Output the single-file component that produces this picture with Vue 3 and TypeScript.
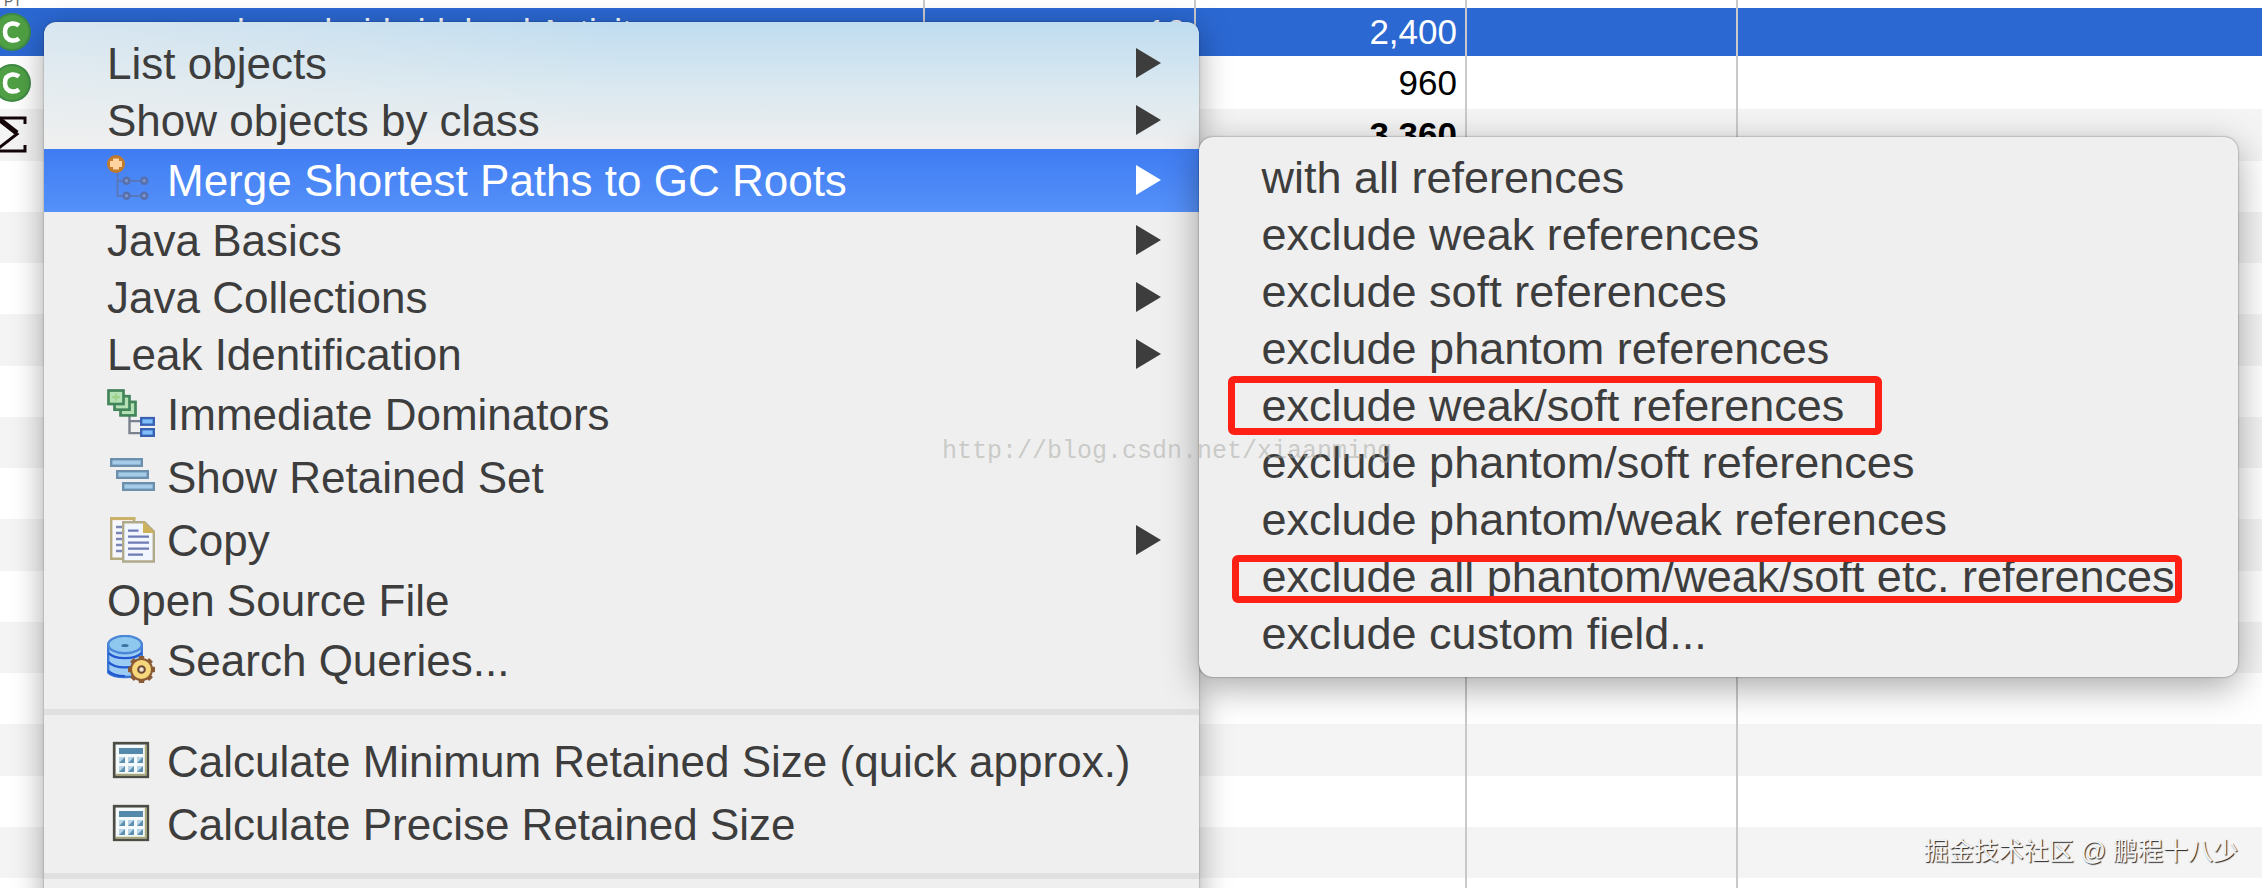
<script setup lang="ts">
interface MenuEntry {
  label: string
  icon?: 'merge' | 'dominators' | 'retained' | 'copy' | 'search' | 'calculator'
  submenu?: boolean
  open?: boolean
}

const groups: MenuEntry[][] = [
  [
    { label: 'List objects', submenu: true },
    { label: 'Show objects by class', submenu: true },
    { label: 'Merge Shortest Paths to GC Roots', icon: 'merge', submenu: true, open: true },
    { label: 'Java Basics', submenu: true },
    { label: 'Java Collections', submenu: true },
    { label: 'Leak Identification', submenu: true },
    { label: 'Immediate Dominators', icon: 'dominators' },
    { label: 'Show Retained Set', icon: 'retained' },
    { label: 'Copy', icon: 'copy', submenu: true },
    { label: 'Open Source File' },
    { label: 'Search Queries...', icon: 'search' },
  ],
  [
    { label: 'Calculate Minimum Retained Size (quick approx.)', icon: 'calculator' },
    { label: 'Calculate Precise Retained Size', icon: 'calculator' },
  ],
  [],
]

const references: { label: string; mark?: 'loose' | 'tight' }[] = [
  { label: 'with all references' },
  { label: 'exclude weak references' },
  { label: 'exclude soft references' },
  { label: 'exclude phantom references' },
  { label: 'exclude weak/soft references', mark: 'loose' },
  { label: 'exclude phantom/soft references' },
  { label: 'exclude phantom/weak references' },
  { label: 'exclude all phantom/weak/soft etc. references', mark: 'tight' },
  { label: 'exclude custom field...' },
]

const emptyRows = 15
const keyColumns = [4, 7, 10]
const keyRows = [7, 10]
const gearAngles = [0, 45, 90, 135, 180, 225, 270, 315]
</script>

<template>
  <main class="screen">
    <table class="histogram">
      <colgroup>
        <col class="name-col" />
        <col class="size-col" />
        <col class="size-col" />
        <col class="size-col" />
        <col />
      </colgroup>
      <tbody>
        <tr class="filter">
          <td><div class="cut">PT</div></td>
          <td></td><td></td><td></td><td></td>
        </tr>
        <tr class="selected">
          <td>
            <div class="name">
              <svg class="class-icon" viewBox="7 0 32 38" aria-hidden="true">
                <circle cx="19" cy="19" r="19" fill="#3f8a45" />
                <circle cx="19" cy="19" r="17" fill="#4f9f44" />
                <path d="M26 12.500Q23 10 19 10.500Q12 11.500 12 19Q12 26.500 19 27.500Q23 28 26 25.500" fill="none" stroke="#fff" stroke-width="4.500" />
              </svg>
              <span>com.example.android.sideload Activity</span>
            </div>
          </td>
          <td>10</td><td>2,400</td><td></td><td></td>
        </tr>
        <tr class="second">
          <td>
            <div class="name">
              <svg class="class-icon" viewBox="7 0 32 38" aria-hidden="true">
                <circle cx="19" cy="19" r="19" fill="#3f8a45" />
                <circle cx="19" cy="19" r="17" fill="#4f9f44" />
                <path d="M26 12.500Q23 10 19 10.500Q12 11.500 12 19Q12 26.500 19 27.500Q23 28 26 25.500" fill="none" stroke="#fff" stroke-width="4.500" />
              </svg>
            </div>
          </td>
          <td></td><td>960</td><td></td><td></td>
        </tr>
        <tr class="total">
          <td>
            <svg class="sigma" viewBox="0 0 28 38" aria-hidden="true">
              <path d="M-8 2H25V8M-4 2L17 18L-5 35H25V29" fill="none" stroke="#140508" stroke-width="3" />
              <path d="M-2 2L17 17" stroke="#140508" stroke-width="5" />
            </svg>
          </td>
          <td></td><td>3,360</td><td></td><td></td>
        </tr>
        <tr v-for="n in emptyRows" :key="n" class="empty">
          <td></td><td></td><td></td><td></td><td></td>
        </tr>
      </tbody>
    </table>

    <nav class="menu" aria-label="Context menu">
      <ul v-for="(group, g) in groups" :key="g" class="group">
        <li v-for="item in group" :key="item.label" class="entry">
          <button type="button" class="item" :class="{ tall: item.icon, open: item.open }">
            <svg v-if="item.icon" class="icon" viewBox="0 0 16 16" aria-hidden="true">
              <g v-if="item.icon === 'merge'">
                <path d="M3.500 6V13.600H12M3.500 8.600H12" fill="none" stroke="#5b76b5" stroke-width=".6" />
                <circle cx="3" cy="3" r="3" fill="#c27a2c" />
                <path d="M2 1.200H4V2H5V4H4V4.800H2V4H1V2H2Z" fill="#ffd3a0" />
                <g fill="#7c93c6" stroke="#5770ad" stroke-width=".8">
                  <circle cx="6.500" cy="8.600" r="1" />
                  <circle cx="12.400" cy="8.600" r="1" />
                  <circle cx="6.500" cy="13.600" r="1" />
                  <circle cx="12.400" cy="13.600" r="1" />
                </g>
              </g>
              <g v-else-if="item.icon === 'dominators'">
                <path d="M7.500 8.500V14.700H11M7.500 10.700H11" fill="none" stroke="#7a818e" stroke-width=".8" />
                <g fill="#b5e0b4" stroke="#43855a" stroke-width=".9">
                  <rect x="4.500" y="4.300" width="5" height="4.500" />
                  <rect x="2.500" y="2.400" width="5" height="4.500" />
                  <rect x=".5" y=".5" width="5" height="4.500" />
                </g>
                <path d="M1.700 2.700H4.300M3 1.600V3.900" stroke="#9fd289" stroke-width=".7" />
                <g fill="#7fc0fb" stroke="#3a62b4" stroke-width=".8">
                  <rect x="11.400" y="9.700" width="4.200" height="2.200" />
                  <rect x="11.400" y="13.400" width="4.200" height="2.200" />
                </g>
              </g>
              <g v-else-if="item.icon === 'retained'" fill="#a4cbe8" stroke="#6c8fae" stroke-width=".8">
                <rect x="1.400" y="2.400" width="10.200" height="2.200" />
                <rect x="3.400" y="6.400" width="10.200" height="2.200" />
                <rect x="5.400" y="10.400" width="10.200" height="2.200" />
              </g>
              <g v-else-if="item.icon === 'copy'">
                <path d="M1.400 1.200H9V14.600H1.400Z" fill="#f5f7fc" stroke="#b5aa7c" stroke-width=".8" />
                <path d="M1 1.200H9.500" stroke="#c9b267" stroke-width="1" />
                <path d="M3 4H5M3 6H5M3 8H5M3 10H5M3 12H5" stroke="#7b86b4" stroke-width=".8" />
                <path d="M5.400 2.400H12.500L15.600 5.500V15.500H5.400Z" fill="#f2f6fe" stroke="#b0a98a" stroke-width=".8" />
                <path d="M12 2L16 6H12Z" fill="#cdb15b" />
                <path d="M7 5.200H10.500M7 7.200H14M7 9.200H14M7 11.200H14M7 13.200H12" stroke="#6f7bb5" stroke-width=".8" />
              </g>
              <g v-else-if="item.icon === 'search'">
                <path d="M.4 3V12.500Q1.500 14 6 14T11.600 12.500V3Z" fill="#9cccf4" stroke="#3d78d8" stroke-width=".8" />
                <path d="M.5 6Q2 7.700 6 7.700T11.500 6M.5 9Q2 10.800 6 10.800T11.500 9M.5 12Q2 13.700 6 13.700" fill="none" stroke="#2358d0" stroke-width=".8" />
                <ellipse cx="6" cy="3.200" rx="5.600" ry="2.900" fill="#8fc8ee" stroke="#4a86d8" stroke-width=".8" />
                <ellipse cx="6" cy="3.500" rx="1.200" ry=".5" fill="#3a6f9f" />
                <g fill="#8a5a35">
                  <rect v-for="a in gearAngles" :key="a" x="10.600" y="7" width="1.800" height="2" :transform="`rotate(${a} 11.500 11.500)`" />
                </g>
                <circle cx="11.500" cy="11.500" r="3.500" fill="#f6d77c" stroke="#8a5a35" stroke-width=".7" />
                <circle cx="11.500" cy="11.500" r="1.100" fill="#efe6d8" stroke="#6e4a35" stroke-width=".7" />
              </g>
              <g v-else>
                <rect x="2.400" y="2.400" width="11.200" height="11.200" fill="#f4f9fc" stroke="#4c4c44" stroke-width=".9" />
                <path d="M3 12.900H12.900V3" fill="none" stroke="#a9a873" stroke-width=".6" />
                <rect x="4" y="4" width="8" height="2" fill="#5489ab" />
                <template v-for="y in keyRows" :key="y">
                  <g v-for="x in keyColumns" :key="x">
                    <rect :x="x" :y="y" width="2" height="2" fill="#b9d5e6" />
                    <path :d="`M${x + 2} ${y}V${y + 2}H${x}Z`" fill="#5d8fae" />
                  </g>
                </template>
              </g>
            </svg>
            <span>{{ item.label }}</span>
            <svg v-if="item.submenu" class="arrow" viewBox="0 0 25 30" aria-hidden="true">
              <path d="M0 0L25 15L0 30Z" fill="currentColor" />
            </svg>
          </button>

          <ul v-if="item.open" class="submenu">
            <li v-for="reference in references" :key="reference.label">
              <button type="button" class="item">
                <span class="label">
                  {{ reference.label }}
                  <span v-if="reference.mark" class="mark" :class="reference.mark"></span>
                </span>
              </button>
            </li>
          </ul>
        </li>
      </ul>
    </nav>

    <p class="source">http://blog.csdn.net/xiaanming</p>
    <p class="credit">掘金技术社区 @ 鹏程十八少</p>
  </main>
</template>

<style>
body {
  margin: 0;
}
</style>

<style scoped>
.screen {
  position: relative;
  height: 100vh;
  overflow: hidden;
  background: #fff;
  font-family: "Liberation Sans", Arial, sans-serif;
}

.histogram {
  width: 100%;
  table-layout: fixed;
  border-collapse: separate;
  border-spacing: 0;
  font-size: 35px;
  line-height: 40px;
  color: #000;
}

.name-col {
  width: 925px;
}

.size-col {
  width: 271px;
}

td {
  height: 51px;
  box-sizing: border-box;
  padding: 0 8px 0 0;
  border-right: 2px solid #c9c9cb;
  text-align: right;
  vertical-align: middle;
}

td:first-child {
  text-align: left;
}

td:last-child {
  border-right: 0;
}

.filter td {
  height: 8px;
}

.cut {
  display: flex;
  align-items: flex-end;
  height: 8px;
  overflow: hidden;
  padding-left: 4px;
  font-size: 14px;
  line-height: 14px;
  color: #666;
}

.selected td {
  height: 48px;
  background: #2b68d2;
  color: #fff;
}

.second td {
  height: 53px;
}

.total td {
  height: 52px;
  background: #f4f4f4;
  font-weight: bold;
}

.empty:nth-child(even) td {
  background: #f4f4f4;
}

.empty:nth-child(4n) td {
  height: 52px;
}

.name {
  display: flex;
  align-items: center;
  gap: 24px;
}

.class-icon {
  flex: none;
  width: 32px;
  height: 38px;
}

.sigma {
  display: block;
  width: 28px;
  height: 38px;
}

.menu {
  position: absolute;
  top: 22px;
  left: 44px;
  width: max-content;
  padding: 13px 0 40px;
  border-radius: 12px 12px 0 0;
  background:
    linear-gradient(100deg, rgba(240, 240, 240, 0.5), rgba(240, 240, 240, 0) 50%) 0 0 / 100% 127px no-repeat,
    linear-gradient(#bfdcf0, #d9e8f0 50%, #efefef) 0 0 / 100% 127px no-repeat,
    #efefef;
  box-shadow: 0 8px 32px rgba(0, 0, 0, 0.35), 0 0 2px rgba(0, 0, 0, 0.4);
  font-size: 44px;
}

.group,
.submenu {
  margin: 0;
  padding: 0;
  list-style: none;
}

.group + .group {
  margin-top: 17px;
  padding-top: 15px;
  border-top: 6px solid #e0e0e0;
}

.entry {
  position: relative;
}

.item {
  display: flex;
  align-items: center;
  gap: 12px;
  width: 100%;
  height: 57px;
  padding: 0 68px 0 63px;
  border: 0;
  background: none;
  color: #3d3d3d;
  font: inherit;
  line-height: 50px;
  text-align: left;
  white-space: nowrap;
}

.item.tall {
  height: 63px;
}

.item.open {
  background: linear-gradient(#3f7cf2, #5591f9);
  color: #fff;
}

.icon {
  flex: none;
  width: 48px;
  height: 48px;
  margin-bottom: 4px;
}

.arrow {
  flex: none;
  width: 25px;
  height: 30px;
  margin-left: auto;
  margin-right: -30px;
  margin-bottom: 2px;
}

.submenu {
  position: absolute;
  top: -12px;
  left: 100%;
  width: max-content;
  padding: 12px 0 15px;
  border-radius: 14px;
  background: #efefef;
  box-shadow: 0 10px 36px rgba(0, 0, 0, 0.35), 0 0 2px rgba(0, 0, 0, 0.5);
  font-size: 45px;
}

.submenu .item {
  padding: 0 63px;
}

.label {
  position: relative;
}

.mark {
  position: absolute;
  border: 7px solid #ff2015;
  border-radius: 6px;
}

.mark.loose {
  inset: -5px -38px -4px -34px;
}

.mark.tight {
  inset: 3px -7px -1px -30px;
}

.source,
.credit {
  position: absolute;
  margin: 0;
  pointer-events: none;
  white-space: nowrap;
}

.source {
  top: 437px;
  left: 942px;
  color: rgba(165, 165, 160, 0.5);
  font-family: "Liberation Mono", monospace;
  font-size: 25px;
  line-height: 30px;
}

.credit {
  right: 24px;
  bottom: 19px;
  color: #f4f4f4;
  font-family: "Liberation Sans", "Noto Sans CJK SC", sans-serif;
  font-size: 25px;
  line-height: 36px;
  text-shadow: 1px 1px 1px #222;
}
</style>
